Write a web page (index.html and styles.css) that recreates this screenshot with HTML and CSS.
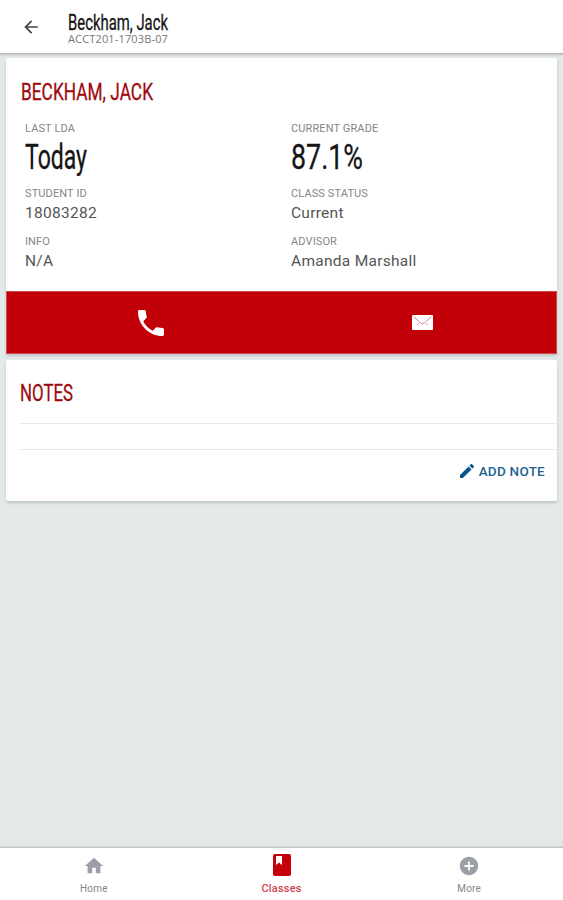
FILE: index.html
```
<!DOCTYPE html>
<html lang="en">
<head>
<meta charset="utf-8">
<title>Beckham, Jack</title>
<link rel="stylesheet" href="styles.css">
</head>
<body>
<div class="app">
  <header class="topbar">
    <svg class="back" viewBox="0 0 24 24"><path d="M20 11H7.83l5.59-5.59L12 4l-8 8 8 8 1.41-1.41L7.83 13H20v-2z"/></svg>
    <div class="titles">
      <svg class="condensed topbar-title" width="102" height="22"><text x="0" y="18" textLength="100" lengthAdjust="spacingAndGlyphs">Beckham, Jack</text></svg>
      <div class="course">ACCT201-1703B-07</div>
    </div>
  </header>
  <main class="content">
    <section class="card student">
      <svg class="condensed heading" width="134" height="30"><text x="0" y="23" textLength="132" lengthAdjust="spacingAndGlyphs">BECKHAM, JACK</text></svg>
      <div class="details">
        <div class="field big">
          <div class="label">LAST LDA</div>
          <svg class="condensed large" width="80" height="42"><text x="0" y="35" textLength="62" lengthAdjust="spacingAndGlyphs">Today</text></svg>
        </div>
        <div class="field big">
          <div class="label">CURRENT GRADE</div>
          <svg class="condensed large" width="80" height="42"><text x="0" y="35" textLength="72" lengthAdjust="spacingAndGlyphs">87.1%</text></svg>
        </div>
        <div class="field"><div class="label">STUDENT ID</div><div class="value">18083282</div></div>
        <div class="field"><div class="label">CLASS STATUS</div><div class="value">Current</div></div>
        <div class="field"><div class="label">INFO</div><div class="value">N/A</div></div>
        <div class="field"><div class="label">ADVISOR</div><div class="value">Amanda Marshall</div></div>
      </div>
      <div class="actions">
        <div class="action"><svg class="phone" viewBox="3 3 18 18"><path d="M6.62 10.79c1.44 2.83 3.76 5.14 6.59 6.59l2.2-2.2c.27-.27.67-.36 1.02-.24 1.12.37 2.33.57 3.57.57.55 0 1 .45 1 1V20c0 .55-.45 1-1 1-9.39 0-17-7.61-17-17 0-.55.45-1 1-1h3.5c.55 0 1 .45 1 1 0 1.25.2 2.45.57 3.57.11.35.03.74-.25 1.02l-2.2 2.2z"/></svg></div>
        <div class="action"><svg class="mail" viewBox="0 0 21 15"><rect width="21" height="15" rx="1"/><path d="M1.5 1.5L8.5 8Q10.500 9.500 12.500 8L19.500 1.500M6.500 8.500L5 10M14.500 8.500L16 10"/></svg></div>
      </div>
    </section>
    <section class="card notes">
      <svg class="condensed heading" width="60" height="30"><text x="0" y="23" textLength="53" lengthAdjust="spacingAndGlyphs">NOTES</text></svg>
      <div class="note-row"></div>
      <div class="add">
        <svg class="pencil" viewBox="3 3 18 18"><path d="M3 17.250V21h3.750L17.810 9.940l-3.750-3.750L3 17.250zM20.710 7.040c.39-.39.39-1.020 0-1.410l-2.340-2.340c-.39-.39-1.020-.39-1.410 0l-1.830 1.830 3.750 3.750 1.830-1.830z"/></svg>
        <span>ADD NOTE</span>
      </div>
    </section>
  </main>
  <nav class="tabs">
    <div class="tab"><svg viewBox="0 0 24 24"><path d="M10 20v-6h4v6h5v-8h3L12 3 2 12h3v8z"/></svg><span>Home</span></div>
    <div class="tab active"><svg class="book" viewBox="0 0 18 22"><rect width="18" height="22" rx="2"/><path d="M3 2h6v9L6 8.500 3 11z"/></svg><span>Classes</span></div>
    <div class="tab"><svg viewBox="0 0 24 24"><path d="M12 2C6.480 2 2 6.480 2 12s4.480 10 10 10 10-4.480 10-10S17.520 2 12 2zm5 11h-4v4h-2v-4H7v-2h4V7h2v4h4v2z"/></svg><span>More</span></div>
  </nav>
</div>
</body>
</html>
```
FILE: styles.css
```
* { box-sizing: border-box; }
body { margin: 0; background: #e3e8e9; font-family: Roboto, sans-serif; }
svg { display: block; }
.app { display: flex; flex-direction: column; height: 900px; }
.topbar { display: flex; height: 54px; background: #fff; border-bottom: 1px solid #b5b8b9; box-shadow: 0 1px 2px rgba(0,0,0,.18); padding: 12px 0 0 21px; }
.back { width: 20px; height: 20px; margin-top: 5px; fill: #444; }
.titles { margin-left: 27px; }
.condensed { overflow: visible; }
.condensed text { stroke-width: .3px; }
.topbar-title { font-size: 21.500px; fill: #151515; stroke: #151515; }
.course { font: 11px/12px "Open Sans", sans-serif; color: #777; letter-spacing: .15px; margin-top: -1px; white-space: nowrap; }
.content { flex: 1; padding: 4px 6px 0; }
.card { background: #fff; border-radius: 2px; box-shadow: 0 2px 3px rgba(0,0,0,.16); }
.student { height: 296px; display: flex; flex-direction: column; padding-top: 19px; }
.heading { margin-left: 15px; font-size: 24.500px; fill: #a0080f; stroke: #a0080f; flex: none; }
.details { display: grid; grid-template-columns: 266px 1fr; grid-template-rows: 65px 48px 48px; padding: 15px 0 0 19px; flex: 1; min-height: 0; }
.label { font-size: 11px; line-height: 13px; letter-spacing: .12px; color: #85868a; white-space: nowrap; }
.large { font-size: 35px; fill: #151515; stroke: #151515; margin-top: -1px; }
.value { font-size: 15.500px; line-height: 20px; letter-spacing: .28px; color: #555; margin-top: 3px; }
.actions { display: flex; flex: none; height: 63px; background: #c10008; border: 1px solid #cf4a50; }
.action { flex: 1; display: flex; align-items: center; justify-content: center; }
.phone { width: 26px; height: 26px; fill: #fff; margin-left: 14px; }
.mail { width: 21px; height: 15px; margin-left: 7px; fill: #fff; }
.mail path { fill: none; stroke: #d9828a; stroke-width: 1; }
.notes { margin-top: 6px; height: 141px; padding-top: 18px; }
.notes .heading { margin-left: 14px; }
.note-row { margin: 15px 0 0 14px; height: 27px; border: solid #e9eaeb; border-width: 1px 0; }
.add { display: flex; align-items: center; justify-content: flex-end; gap: 5px; height: 42px; padding-right: 12px; font-size: 13.500px; font-weight: 500; letter-spacing: .25px; color: #236491; }
.pencil { width: 14px; height: 14px; fill: #07568b; }
.tabs { display: flex; height: 53px; background: #fff; border-top: 1px solid #c4c8c9; box-shadow: 0 -1px 1px rgba(0,0,0,.08); }
.tab { flex: 1; display: flex; flex-direction: column; align-items: center; padding-top: 7px; color: #85868a; font-size: 10px; letter-spacing: .2px; }
.tab svg { width: 22px; height: 22px; fill: #9c9ea8; }
.tab span { line-height: 12px; margin-top: 6px; }
.active { color: #d04349; font-weight: 500; font-size: 11px; }
.tab .book { width: 18px; height: 22px; fill: #c5000b; margin-top: -1px; margin-bottom: 1px; }
.book path { fill: #fff; }
```
